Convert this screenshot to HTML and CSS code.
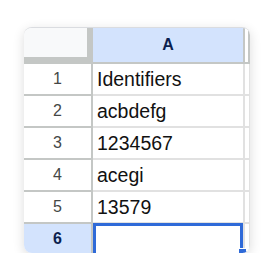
FILE: index.html
```html
<!DOCTYPE html>
<html>
  <head>
    <title>Sheet</title>
    <link rel="stylesheet" href="styles.css">
  </head>
  <body>
    <div class="sheet">
      <div class="grid">
        <div class="corner"></div>
        <div class="col-head selected">A</div>
        <div class="col-head"></div>

        <div class="row-head">1</div>
        <div class="cell">Identifiers</div>
        <div class="cell"></div>

        <div class="row-head">2</div>
        <div class="cell">acbdefg</div>
        <div class="cell"></div>

        <div class="row-head">3</div>
        <div class="cell">1234567</div>
        <div class="cell"></div>

        <div class="row-head">4</div>
        <div class="cell">acegi</div>
        <div class="cell"></div>

        <div class="row-head">5</div>
        <div class="cell">13579</div>
        <div class="cell"></div>

        <div class="row-head selected last">6</div>
        <div class="cell active last"></div>
        <div class="cell last"></div>
      </div>
    </div>
  </body>
</html>
```

FILE: styles.css
```css
body {
  margin: 0;
  background: #ffffff;
  font-family: "Liberation Sans", Arial, sans-serif;
}
.sheet {
  margin: 27px 0 0 24px;
  width: 226px;
  height: 226px;
  border-top: 1px solid #dadce0;
  border-radius: 8px;
  overflow: hidden;
  box-sizing: border-box;
  box-shadow: 0 3px 12px rgba(0, 0, 0, 0.14);
  background: #ffffff;
}
.grid {
  display: grid;
  grid-template-columns: 69px 152px 5px;
  grid-template-rows: 36px repeat(5, 32px) 1fr;
  height: 100%;
}
.grid > div {
  box-sizing: border-box;
}
.corner {
  background: #f8f9fa;
  border-right: 6px solid #c4c7c5;
  border-bottom: 7px solid #c4c7c5;
}
.col-head {
  background: #ffffff;
  border-right: 2px solid #c4c7c5;
  border-bottom: 2px solid #c4c7c5;
  display: flex;
  align-items: center;
  justify-content: center;
  font-size: 16px;
  font-weight: bold;
  color: #0b1f4f;
}
.col-head.selected {
  background: #d3e3fd;
}
.row-head {
  border-right: 2px solid #c4c7c5;
  border-bottom: 2px solid #c4c7c5;
  display: flex;
  align-items: center;
  justify-content: center;
  font-size: 16px;
  color: #444746;
}
.row-head.selected {
  background: #d3e3fd;
  color: #0b1f4f;
  font-weight: bold;
}
.cell {
  border-right: 2px solid #e1e1e1;
  border-bottom: 2px solid #e1e1e1;
  display: flex;
  align-items: center;
  padding-left: 4px;
  font-size: 19.5px;
  color: #111111;
}
.last {
  border-bottom: none;
}
.cell.active {
  position: relative;
}
.cell.active::after {
  content: "";
  position: absolute;
  top: -1px;
  left: 0;
  right: 0;
  bottom: -4px;
  border: 3px solid #2f6ad8;
}
.cell.active::before {
  content: "";
  position: absolute;
  right: -4px;
  top: 24px;
  width: 7px;
  height: 7px;
  background: #2f6ad8;
  border: 1px solid #ffffff;
  z-index: 1;
}
```
